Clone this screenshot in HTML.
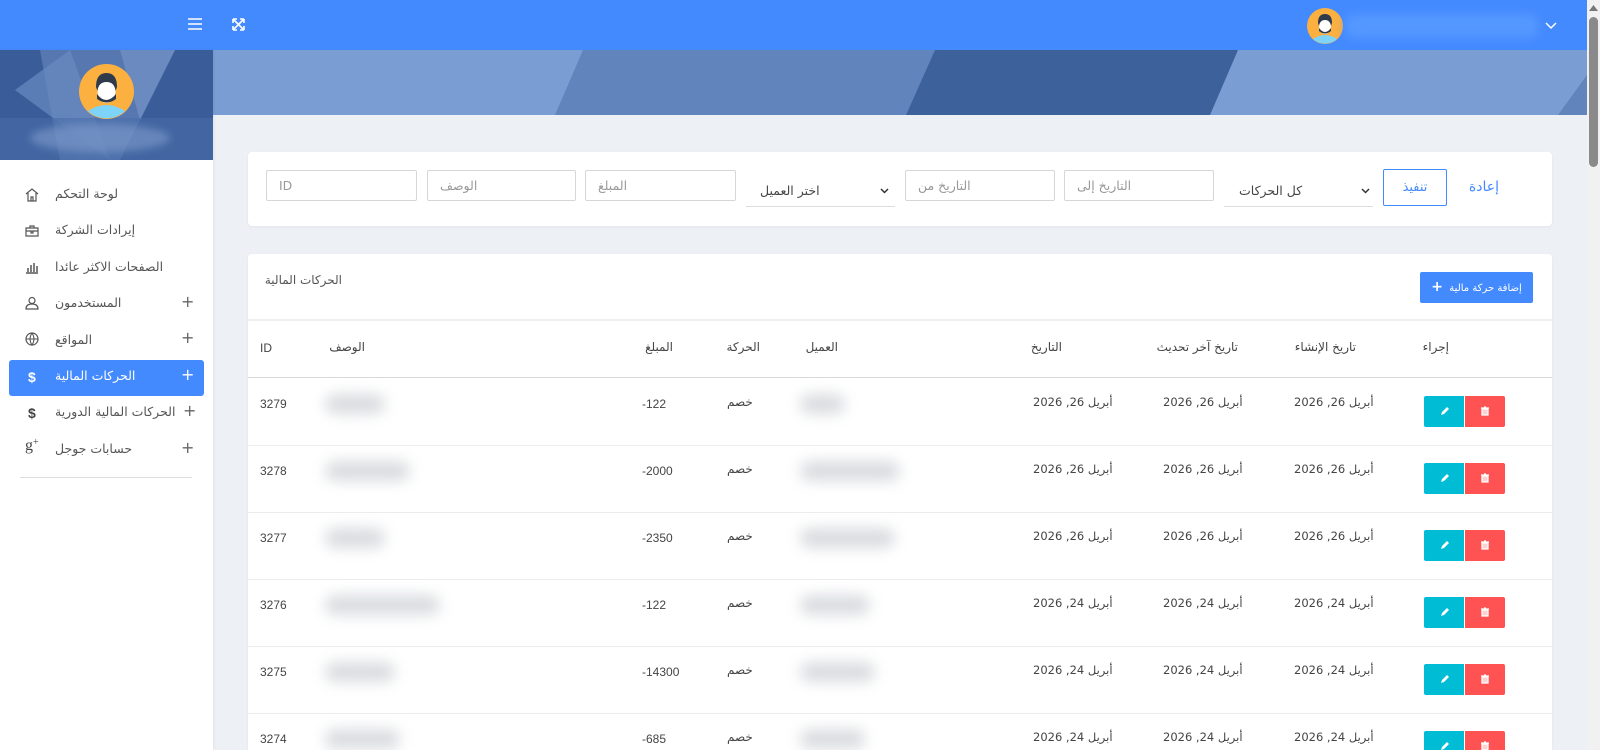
<!DOCTYPE html>
<html style="width:1600px;height:750px;overflow:hidden"><head><meta charset="utf-8"><style>
*{box-sizing:border-box;margin:0;padding:0}
body{width:1600px;height:750px;overflow:hidden;background:#edf1f5;font-family:"DejaVu Sans","Liberation Sans",sans-serif;font-size:12px;color:#555;position:relative}
.a{position:absolute;white-space:nowrap}
.r{direction:rtl}
.inp{position:absolute;height:31px;border:1px solid #d6d6d6;border-radius:2px;background:#fff;color:#999;font-size:12.5px;line-height:29px;padding:0 12px;text-align:left}
.blob{position:absolute;background:#d9dcdf;border-radius:10px;filter:blur(7px)}
.btn{position:absolute;width:40px;height:31px}
.si{position:absolute;left:55px;direction:rtl;font-size:12.5px;color:#555;white-space:nowrap}
</style></head><body>
<!-- topbar -->
<div class="a" style="left:0;top:0;width:1587px;height:50px;background:#448aff;box-shadow:0 1px 3px rgba(0,0,0,.2)"></div>
<svg class="a" style="left:187px;top:17px" width="16" height="14"><path d="M1 2h14M1 7h14M1 12h14" stroke="#fff" stroke-width="1.6"/></svg>
<svg class="a" style="left:231px;top:17px" width="15" height="15"><path d="M2 2l11 11M13 2L2 13M2 2h4M2 2v4M13 2h-4M13 2v4M2 13h4M2 13v-4M13 13h-4M13 13v-4" stroke="#fff" stroke-width="1.6" fill="none"/></svg>
<svg class="a" style="left:1307px;top:8px" width="36" height="36"><circle cx="18" cy="18" r="18" fill="#fbb040"/><path d="M6 31q12-8 24 0a18 18 0 0 1-24 0z" fill="#7dd3f8"/><ellipse cx="18" cy="18" rx="6" ry="8" fill="#fff"/><path d="M11 15q0-9 7-9t7 9l-1 3q-1-6-6-6t-6 6z" fill="#2f3b4a"/><path d="M12 20q6 8 12 0l0 3q-6 5-12 0z" fill="#2f3b4a"/></svg>
<div class="a" style="left:1346px;top:14px;width:192px;height:24px;background:#5598ff;border-radius:8px;filter:blur(5px)"></div>
<svg class="a" style="left:1545px;top:22px" width="12" height="8"><path d="M1 1l5 5 5-5" stroke="#fff" stroke-width="1.5" fill="none"/></svg>
<!-- scrollbar -->
<div class="a" style="left:1587px;top:0;width:13px;height:750px;background:#f1f1f1"></div>
<div class="a" style="left:1589px;top:17px;width:9px;height:150px;background:#8a8a8a;border-radius:5px"></div>
<svg class="a" style="left:1589px;top:4px" width="9" height="8"><path d="M0 7l4.5-6 4.5 6z" fill="#777"/></svg>
<!-- banner -->
<svg class="a" style="left:213px;top:50px" width="1374" height="65">
<rect width="1374" height="65" fill="#7a9dd4"/>
<polygon points="370,0 722,0 693,65 342,65" fill="#6284bc"/>
<polygon points="722,0 1025,0 997,65 693,65" fill="#3d619b"/>
<polygon points="1374,25 1374,65 1345,65" fill="#6184bd"/>
</svg>
<!-- sidebar -->
<div class="a" style="left:0;top:50px;width:213px;height:700px;background:#fff;box-shadow:1px 0 3px rgba(0,0,0,.06)"></div>
<svg class="a" style="left:0;top:50px" width="213" height="110">
<rect width="213" height="110" fill="#3a5d99"/>
<polygon points="40,0 175,0 120,110 60,110" fill="#5677b0"/>
<polygon points="15,40 70,0 110,110" fill="#6a8bc2" opacity=".7"/>
<polygon points="120,0 175,0 140,70" fill="#7594c8" opacity=".7"/>
<rect x="0" y="68" width="213" height="42" fill="#4a6ca8" opacity=".6"/>
<ellipse cx="100" cy="88" rx="70" ry="14" fill="#8aa6d4" opacity=".5" filter="blur(4px)"/>
</svg>
<svg class="a" style="left:79px;top:64px" width="55" height="55"><circle cx="27.5" cy="27.5" r="27.5" fill="#fbb040"/><path d="M9 47q18-12 37 0a27 27 0 0 1-37 0z" fill="#7dd3f8"/><ellipse cx="27.5" cy="27" rx="9" ry="12" fill="#fff"/><path d="M17 23q0-14 10.5-14t10.5 14l-1.5 4q-1-9-9-9t-9 9z" fill="#2f3b4a"/><path d="M18 30q9 12 19 0l0 5q-9 7-19 0z" fill="#2f3b4a"/></svg>

<div class="a" style="left:9px;top:360px;width:195px;height:36px;background:#448aff;border-radius:3px"></div>
<div class="si" style="top:186px">لوحة التحكم</div>
<div class="si" style="top:222px">إيرادات الشركة</div>
<div class="si" style="top:259px">الصفحات الاكثر عائدا</div>
<div class="si" style="top:295px">المستخدمون</div>
<div class="si" style="top:332px">المواقع</div>
<div class="si" style="top:368px;color:#fff">الحركات المالية</div>
<div class="si" style="top:404px">الحركات المالية الدورية</div>
<div class="si" style="top:441px">حسابات جوجل</div>
<svg class="a" style="left:25px;top:188px" width="14" height="14"><path d="M1 6l6-5 6 5M3 5v8h8V5M6 13V9h2v4" stroke="#555" fill="none" stroke-width="1.2"/></svg>
<svg class="a" style="left:25px;top:224px" width="14" height="14"><path d="M1 4h12v8H1zM5 4V2h4v2M1 7h12M6 7v2h2V7" stroke="#555" fill="none" stroke-width="1.2"/></svg>
<svg class="a" style="left:25px;top:260px" width="14" height="14"><path d="M1 13h12M3 12V8M6 12V5M9 12V3M12 12V6" stroke="#555" fill="none" stroke-width="1.5"/></svg>
<svg class="a" style="left:25px;top:296px" width="14" height="14"><circle cx="7" cy="4.5" r="3" stroke="#555" fill="none" stroke-width="1.2"/><path d="M1 13q0-5 6-5t6 5z" stroke="#555" fill="none" stroke-width="1.2"/></svg>
<svg class="a" style="left:25px;top:332px" width="14" height="14"><circle cx="7" cy="7" r="6" stroke="#555" fill="none" stroke-width="1.2"/><path d="M1 7h12M7 1q-4 6 0 12M7 1q4 6 0 12" stroke="#555" fill="none" stroke-width="1"/></svg>
<div class="a" style="left:28px;top:369px;color:#fff;font-weight:bold;font-size:14px;font-family:'Liberation Sans'">$</div>
<div class="a" style="left:28px;top:405px;color:#444;font-weight:bold;font-size:14px;font-family:'Liberation Sans'">$</div>
<div class="a" style="left:25px;top:437px;color:#444;font-size:16px;font-family:'Liberation Serif'">g<span style="font-size:10px;vertical-align:top">+</span></div>
<div class="a" style="left:181px;top:292px;font-size:16px;color:#666">+</div>
<div class="a" style="left:181px;top:328px;font-size:16px;color:#666">+</div>
<div class="a" style="left:181px;top:365px;font-size:16px;color:#fff">+</div>
<div class="a" style="left:183px;top:401px;font-size:16px;color:#666">+</div>
<div class="a" style="left:181px;top:438px;font-size:16px;color:#666">+</div>
<div class="a" style="left:20px;top:477px;width:172px;height:1px;background:#ddd"></div>

<!-- filter card -->
<div class="a" style="left:248px;top:152px;width:1304px;height:74px;background:#fff;border-radius:4px;box-shadow:0 1px 3px rgba(0,0,0,.05)"></div>
<div class="inp" style="left:266px;top:170px;width:151px">ID</div>
<div class="inp" style="left:427px;top:170px;width:149px"><span class="r" style="display:inline-block">الوصف</span></div>
<div class="inp" style="left:585px;top:170px;width:151px"><span class="r" style="display:inline-block">المبلغ</span></div>
<div class="a" style="left:746px;top:176px;width:149px;height:31px;border-bottom:1px solid #ddd"></div>
<div class="a r" style="left:760px;top:183px;color:#444;font-size:12.5px">اختر العميل</div>
<svg class="a" style="left:880px;top:188px" width="9" height="6"><path d="M1 1l3.5 3.5L8 1" stroke="#333" stroke-width="1.5" fill="none"/></svg>
<div class="inp" style="left:905px;top:170px;width:150px"><span class="r" style="display:inline-block">التاريخ من</span></div>
<div class="inp" style="left:1064px;top:170px;width:150px"><span class="r" style="display:inline-block">التاريخ إلى</span></div>
<div class="a" style="left:1224px;top:176px;width:149px;height:31px;border-bottom:1px solid #ddd"></div>
<div class="a r" style="left:1239px;top:183px;color:#444;font-size:12.5px">كل الحركات</div>
<svg class="a" style="left:1361px;top:188px" width="9" height="6"><path d="M1 1l3.5 3.5L8 1" stroke="#333" stroke-width="1.5" fill="none"/></svg>
<div class="a" style="left:1383px;top:169px;width:64px;height:37px;border:1px solid #448aff;border-radius:2px;color:#448aff;text-align:center;line-height:35px;font-size:13px">تنفيذ</div>
<div class="a r" style="right:101px;top:179px;color:#448aff;font-size:14px">إعادة</div>

<!-- table card -->
<div class="a" style="left:248px;top:254px;width:1304px;height:496px;background:#fff;border-radius:4px 4px 0 0;box-shadow:0 1px 3px rgba(0,0,0,.05)"></div>
<div class="a r" style="right:1258px;top:273px;font-size:12px;color:#555">الحركات المالية</div>
<div class="a r" style="left:1420px;top:272px;width:113px;height:31px;background:#448aff;border-radius:2px;color:#fff;font-size:10px;line-height:31px;text-align:center">إضافة حركة مالية &nbsp;<b style="font-size:14px">+</b></div>
<div class="a" style="left:248px;top:319px;width:1304px;height:2px;background:#eef0f2"></div>
<div class="a" style="left:248px;top:377px;width:1304px;height:1px;background:#d8d8d8"></div>
<div class="a" style="left:260px;top:341px;font-family:'Liberation Sans';font-size:12px;color:#444">ID</div>
<div class="a r" style="right:1235px;top:340px;color:#444">الوصف</div>
<div class="a r" style="right:927px;top:340px;color:#444">المبلغ</div>
<div class="a r" style="right:840px;top:340px;color:#444">الحركة</div>
<div class="a r" style="right:762px;top:340px;color:#444">العميل</div>
<div class="a r" style="right:538px;top:340px;color:#444">التاريخ</div>
<div class="a r" style="right:362px;top:340px;color:#444">تاريخ آخر تحديث</div>
<div class="a r" style="right:244px;top:340px;color:#444">تاريخ الإنشاء</div>
<div class="a r" style="right:151px;top:340px;color:#444">إجراء</div>

<div id="rows" style="position:absolute;left:0;top:0;width:1600px;height:750px;overflow:hidden"></div>
<script>
var ids=[3279,3278,3277,3276,3275,3274],am=["-122","-2000","-2350","-122","-14300","-685"],dd=[26,26,26,24,24,24];
var dw=[60,85,60,115,70,75],cw=[45,100,95,70,75,65],h="";
for(var i=0;i<6;i++){var t=378+i*67;var y=t+19;
if(i>0)h+='<div class="a" style="left:248px;top:'+t+'px;width:1304px;height:1px;background:#ececec"></div>';
h+='<div class="a" style="left:260px;top:'+y+'px;font-family:\'Liberation Sans\';color:#444">'+ids[i]+'</div>';
h+='<div class="blob" style="left:325px;top:'+(y-3)+'px;width:'+dw[i]+'px;height:20px"></div>';
h+='<div class="a" style="left:642px;top:'+y+'px;font-family:\'Liberation Sans\';color:#444;direction:ltr">'+am[i]+'</div>';
h+='<div class="a r" style="left:727px;top:'+(y-2)+'px;color:#444">خصم</div>';
h+='<div class="blob" style="left:800px;top:'+(y-3)+'px;width:'+cw[i]+'px;height:20px"></div>';
var d='أبريل '+dd[i]+', 2026';
[1033,1163,1294].forEach(function(l){h+='<div class="a r" style="left:'+l+'px;top:'+(y-2)+'px;color:#444;font-size:11.5px">'+d+'</div>';});
h+='<div class="btn" style="left:1424px;top:'+(t+18)+'px;background:#00bcd4;border-radius:2px 0 0 2px"><svg width="40" height="31"><path d="M17 19l1-3 5-5 2 2-5 5z" fill="#fff"/></svg></div>';
h+='<div class="btn" style="left:1465px;top:'+(t+18)+'px;background:#ff5252;border-radius:0 2px 2px 0"><svg width="40" height="31"><path d="M16 12h8M19 11h2M17 13h6v6h-6z" stroke="#fff" stroke-width="1.3" fill="#ffd0d0"/></svg></div>';
}
document.getElementById('rows').innerHTML=h;
</script>
</body></html>
